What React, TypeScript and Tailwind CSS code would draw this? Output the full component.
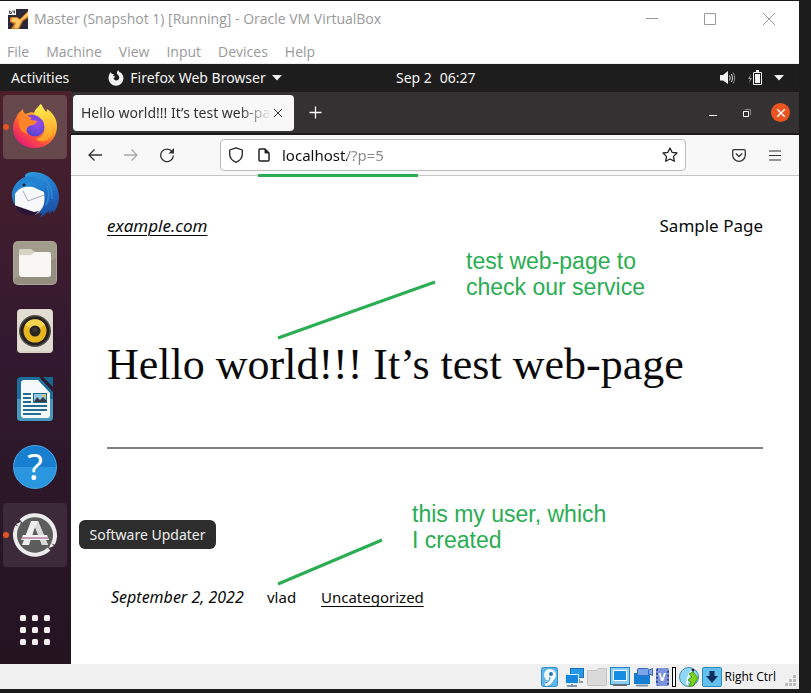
import type { ReactNode } from "react";

const ui = "font-['Open_Sans','Noto_Sans',sans-serif]";
const ubuntu = "font-['Noto_Sans','Open_Sans',sans-serif]";

function VirtualBoxIcon() {
  return (
    <svg width="20" height="20" viewBox="0 0 20 20" aria-hidden="true">
      <rect width="20" height="20" fill="#2b2838" />
      <path d="M3 8h6l3 2 5-5 3-3v7l-5 3-1 2-3 6H3l3-5-4-2V9Z" fill="#dd7a22" />
      <path d="M4 9h5l3 2 8-8v4l-6 4-4 8H6l2-5-5-2Z" fill="#ffc766" />
      <rect width="8" height="6" fill="#f3f3f3" />
      <path d="M1.500 1.500v3h2v-1.500h-2M5 1.500v1.500h1.500M6.500 1.500v3" stroke="#555" fill="none" />
    </svg>
  );
}

function CaretDown() {
  return (
    <svg width="10" height="6" viewBox="0 0 10 6" aria-hidden="true">
      <path d="M0 0h10L5 5.500Z" fill="#f2f2f2" />
    </svg>
  );
}

function FirefoxSymbolic() {
  return (
    <svg width="16" height="16" viewBox="0 0 16 16" aria-hidden="true">
      <path
        d="M2.600 2.200 4 4l2.500.3c-1 .4-1.400 1-1.300 1.800l2 .4c-.3.900-1 1-1.600 1.500.2 1.700 1.500 2.600 3 2.400 1.800-.2 2.900-1.600 2.600-3.400C11 5.500 9.500 5 9 3.500 8.700 2.200 9.300 1 10.300 0c.2 1.400 1.200 2 2.200 2.600 0 0 3 2 3 5.700A7.500 7.500 0 0 1 8 15.800 7.500 7.500 0 0 1 .5 8.300C.5 6 1.300 3.800 2.600 2.200Z"
        fill="#f2f2f2"
      />
    </svg>
  );
}

function FirefoxLogo() {
  return (
    <svg width="46" height="48" viewBox="0 0 46 48" aria-hidden="true">
      <defs>
        <linearGradient id="ffBody" x1="0.850" y1="0.100" x2="0.200" y2="0.950">
          <stop offset="0" stopColor="#ffe847" />
          <stop offset="0.350" stopColor="#ffa326" />
          <stop offset="0.650" stopColor="#ff5536" />
          <stop offset="1" stopColor="#e8187a" />
        </linearGradient>
        <radialGradient id="ffGlobe" cx="0.600" cy="0.250" r="0.800">
          <stop offset="0" stopColor="#a84bf0" />
          <stop offset="1" stopColor="#4b45c8" />
        </radialGradient>
        <linearGradient id="ffFlame" x1="0.500" y1="0" x2="0.600" y2="1">
          <stop offset="0" stopColor="#fff04d" />
          <stop offset="1" stopColor="#ff9a25" />
        </linearGradient>
      </defs>
      <path
        d="M4 15c1-3 2-5 4-6l3-3c0 3 1 4 3 5 4-2 7-2 8-1l7-9 5 8c1-1 1-2 1-3 6 4 10 10 10 17 0 13-10 22-22 22S1 37 1 25c0-4 1-7 3-10Z"
        fill="url(#ffBody)"
      />
      <path d="M29 1c1 6 6 8 10 13 5 6 5 15-1 21-5 5-11 4-14 1 8-2 10-8 8-14-2-5-9-7-10-12 1-4 4-6 7-9Z" fill="url(#ffFlame)" />
      <circle cx="23" cy="24" r="9.500" fill="url(#ffGlobe)" />
      <path d="M6 13c6-1 11 1 13 4l6 1c-1 4-5 4-8 5-3 2-3 5-1 8-6-1-9-5-9-10Z" fill="#ff8429" />
      <path d="M15 13c3-2 9-2 13 2 3 2 4 5 4 8-2-4-5-6-8-6-3-2-6-3-9-4Z" fill="#8445dc" />
    </svg>
  );
}

function ThunderbirdLogo() {
  return (
    <svg width="48" height="48" viewBox="0 0 48 48" aria-hidden="true">
      <defs>
        <linearGradient id="tbBody" x1="0.300" y1="0" x2="0.700" y2="1">
          <stop offset="0" stopColor="#2b9de0" />
          <stop offset="0.550" stopColor="#1f6fc4" />
          <stop offset="1" stopColor="#1d4a9e" />
        </linearGradient>
      </defs>
      <path
        d="M14 4c3-3 6-3 8-3 12 0 25 8 26 24 0 7-2 13-6 17v-3l-4 4v-3l-9 7 2-5C15 45 2 38 1 26 0 18 5 10 14 6Z"
        fill="url(#tbBody)"
      />
      <path d="M4 36V23c4-7 11-8 18-7l11 5c1 8 1 14-5 20l-4 3Z" fill="#f7f8fa" />
      <path d="m12 20 5 10 16-6" stroke="#a7adb4" fill="none" />
      <path d="m3 34 20 7 5-1-4 4C16 46 7 42 3 34Z" fill="#2a1436" />
      <path d="M14 6C7 9 3 15 2 21c2-2 4-3 7-3 2-5 7-8 14-7 4 1 7 4 10 8 0-8-6-15-19-13Z" fill="#2482d2" />
      <path d="M24 3c10 3 18 12 17 25M36 15c3 7 2 13-1 19" stroke="#2f8ad6" strokeWidth="1.500" fill="none" />
      <circle cx="13" cy="14" r="1.500" fill="#0d2140" />
    </svg>
  );
}

function FilesLogo() {
  return (
    <svg width="44" height="44" viewBox="0 0 44 44" aria-hidden="true">
      <rect width="44" height="44" rx="5" fill="#aaa595" />
      <rect x="1" y="1" width="42" height="42" rx="4" fill="#938e7d" />
      <path d="M1 5a4 4 0 0 1 4-4h34a4 4 0 0 1 4 4v12L1 38Z" fill="#a19c8b" />
      <path d="M6 10q0-2 2-2h10l4 3v8H6Z" fill="#d7d3c5" />
      <path d="M6 14h12l4-3h14q2 0 2 2v20q0 3-3 3H9q-3 0-3-3Z" fill="#f8f7f4" />
    </svg>
  );
}

function RhythmboxLogo() {
  return (
    <svg width="36" height="44" viewBox="0 0 36 44" aria-hidden="true">
      <rect width="36" height="44" rx="4" fill="#d9d3c6" />
      <rect x="1" y="1" width="34" height="41" rx="3" fill="#e3ded3" />
      <circle cx="18" cy="22" r="16" fill="#55514c" />
      <circle cx="18" cy="22" r="14.500" fill="#24211f" />
      <circle cx="18" cy="22" r="11.500" fill="#e8b720" />
      <path d="M18 22 8 16a11.500 11.500 0 0 1 20 0Z" fill="#f5d34f" />
      <circle cx="18" cy="22" r="5.500" fill="#272421" />
      <circle cx="18" cy="21" r="2.500" fill="#3a3733" />
    </svg>
  );
}

function WriterLogo() {
  return (
    <svg width="36" height="44" viewBox="0 0 36 44" aria-hidden="true">
      <path d="M4 0h18l14 15v25a4 4 0 0 1-4 4H4a4 4 0 0 1-4-4V4a4 4 0 0 1 4-4Z" fill="#1c6f9c" />
      <path d="M0 22h36v18a4 4 0 0 1-4 4H4a4 4 0 0 1-4-4Z" fill="#4799be" />
      <path d="M26 0h10v10Z" fill="#19658f" />
      <path d="M4 6q0-3 3-3h14l12 13v22q0 3-3 3H7q-3 0-3-3Z" fill="#f6f9fa" />
      <path d="M6 17h8M6 21h8M6 25h8M6 29h24M6 33h24M6 37h18" stroke="#226c91" strokeWidth="2" />
      <rect x="16" y="16" width="14" height="10" fill="#216f98" />
      <rect x="17" y="17" width="12" height="8" fill="#8fc7e5" />
      <path d="m17 25 3-5 3 3 3-3 3 3v2Z" fill="#333c42" />
      <circle cx="27" cy="18.500" r="1.500" fill="#efc14a" />
    </svg>
  );
}

function HelpLogo() {
  return (
    <span className="flex h-11 w-11 items-center justify-center rounded-full border border-[#4aa5e6] bg-linear-to-b from-[#187fd0] from-50% to-[#2b96e0] to-50% text-[36px] leading-[44px] text-white font-['Noto_Sans',sans-serif]">
      ?
    </span>
  );
}

function UpdaterLogo() {
  return (
    <svg width="44" height="44" viewBox="0 0 44 44" aria-hidden="true">
      <circle cx="22" cy="22" r="20" fill="#5d5c5c" />
      <path d="M8 8A20 20 0 0 1 40 31M36 36A20 20 0 0 1 4 13" fill="none" stroke="#ececec" strokeWidth="4" />
      <path d="m3 11 5-2-2 5ZM41 33l-5 2 2-5Z" fill="#ececec" />
      <path d="M18 8h7l10 24h-6L22 14l-6 18h-7Z" fill="#efefef" />
      <path d="m22 14 3-6 10 24h-6Z" fill="#dadada" />
      <path d="M10 22h24l2 5H8Z" fill="#f1f1f1" />
      <path d="M9 25h26" stroke="#95467c" strokeWidth="1" />
    </svg>
  );
}

const dockApps: { name: string; icon: ReactNode; active?: string; running?: boolean }[] = [
  { name: "Firefox Web Browser", icon: <FirefoxLogo />, active: "bg-[#65474c]", running: true },
  { name: "Thunderbird Mail", icon: <ThunderbirdLogo /> },
  { name: "Files", icon: <FilesLogo /> },
  { name: "Rhythmbox", icon: <RhythmboxLogo /> },
  { name: "LibreOffice Writer", icon: <WriterLogo /> },
  { name: "Help", icon: <HelpLogo /> },
  { name: "Software Updater", icon: <UpdaterLogo />, active: "bg-[#3c2a3b]", running: true },
];

function TitleBar() {
  return (
    <header className={`bg-white text-[#999] ${ui}`}>
      <div className="flex h-9 items-center pl-2">
        <VirtualBoxIcon />
        <h1 className="ml-1.5 text-[14px] leading-5 whitespace-nowrap">Master (Snapshot 1) [Running] - Oracle VM VirtualBox</h1>
        <div className="ml-auto flex">
          <button aria-label="Minimize" className="flex h-9 w-[58px] items-center justify-center">
            <svg width="12" height="12" viewBox="0 0 12 12"><path d="M0 5.500h12" stroke="#999" /></svg>
          </button>
          <button aria-label="Maximize" className="flex h-9 w-[58px] items-center justify-center">
            <svg width="12" height="12" viewBox="0 0 12 12"><path d="M.5.500h11v11H.5Z" stroke="#999" fill="none" /></svg>
          </button>
          <button aria-label="Close" className="flex h-9 w-[60px] items-center justify-center">
            <svg width="12" height="12" viewBox="0 0 12 12"><path d="m0 0 12 12M12 0 0 12" stroke="#999" /></svg>
          </button>
        </div>
      </div>
      <nav aria-label="Machine menu" className="flex h-[27px] items-center gap-[17px] border-b border-[#efefef] pt-1 pl-[7px] text-[14px] leading-5">
        {["File", "Machine", "View", "Input", "Devices", "Help"].map((m) => (
          <button key={m}>{m}</button>
        ))}
      </nav>
    </header>
  );
}

function GnomeBar() {
  return (
    <div className={`flex h-[27px] items-center bg-[#1d1d1d] text-[14px] leading-5 text-[#f2f2f2] ${ubuntu}`}>
      <div className="flex w-[396px] items-center pl-[11px]">
        <button>Activities</button>
        <button className="ml-[39px] flex items-center gap-1.5 whitespace-nowrap">
          <FirefoxSymbolic />
          Firefox Web Browser
          <CaretDown />
        </button>
      </div>
      <button className="flex gap-2 whitespace-nowrap">
        <span>Sep 2</span>
        <span>06:27</span>
      </button>
      <button aria-label="System menu" className="mr-[15px] ml-auto flex items-center">
        <svg width="16" height="14" viewBox="0 0 16 14" aria-hidden="true">
          <path d="M0 4h3l5-4v13L3 9.500H0Z" fill="#f2f2f2" />
          <path d="M9.500 4.500q1.500 2.500 0 5M11.500 3q2.500 4 0 8" stroke="#dcdcdc" fill="none" />
          <path d="M13 1.500q3.500 5.500 0 11" stroke="#888" fill="none" />
        </svg>
        <svg className="ml-3 mr-3" width="14" height="16" viewBox="0 0 14 16" aria-hidden="true">
          <path d="M3 4 0 9h2l-1 4 3-5H2Z" fill="#999" />
          <path d="M5.500 2.500h8v12h-8Z" stroke="#f2f2f2" fill="none" />
          <path d="M7 4h5v9H7ZM8 0h3v2H8Z" fill="#f2f2f2" />
        </svg>
        <CaretDown />
      </button>
    </div>
  );
}

function Dock() {
  return (
    <nav aria-label="Dock" className="flex w-[71px] shrink-0 flex-col bg-linear-to-b from-[#4b202b] via-[#32192f] via-45% to-[#231420] pt-1 pl-[3px]">
      <ul className="flex flex-col gap-1">
        {dockApps.map((app) => (
          <li key={app.name} className="relative">
            <button aria-label={app.name} className={`flex h-16 w-16 items-center justify-center rounded ${app.active ?? ""}`}>
              {app.icon}
            </button>
            {app.running && <span className="absolute top-[29px] left-0 h-1.5 w-1.5 rounded-full bg-[#e8541f]" />}
            {app.name === "Software Updater" && (
              <span role="tooltip" className={`absolute top-[17px] left-[76px] z-10 flex h-[29px] w-[137px] items-center justify-center rounded-md bg-[#2d2d2d] text-[14px] leading-5 whitespace-nowrap text-[#eee] ${ubuntu}`}>
                Software Updater
              </span>
            )}
          </li>
        ))}
      </ul>
      <button aria-label="Show Applications" className="mt-auto mb-[2px] flex h-16 w-16 items-center justify-center">
        <svg width="30" height="30" viewBox="0 0 30 30" fill="#f3edf1">
          {[0, 12, 24].map((y) => [0, 12, 24].map((x) => <rect key={`${x}-${y}`} x={x} y={y} width="6" height="6" rx="1.500" />))}
        </svg>
      </button>
    </nav>
  );
}

function TabStrip() {
  return (
    <div className="flex h-11 items-center border-y border-b-2 border-[#1c1b1b] bg-[#333131] pl-0.5">
      <div className={`flex h-9 w-[221px] items-center rounded bg-[#f8f8f8] pl-2 text-[14px] leading-5 text-[#333] ${ubuntu}`}>
        <span className="w-[189px] overflow-hidden whitespace-nowrap [mask-image:linear-gradient(to_right,black_158px,transparent_190px)]">
          Hello world!!! It’s test web-page
        </span>
        <button aria-label="Close tab" className="flex h-5 w-4 items-center justify-center">
          <svg width="8" height="8" viewBox="0 0 8 8"><path d="m0 0 8 8M8 0 0 8" stroke="#333" /></svg>
        </button>
      </div>
      <button aria-label="New tab" className="ml-[13px] flex h-6 w-4 items-center justify-center">
        <svg width="13" height="13" viewBox="0 0 13 13"><path d="M6.500.500v12M.5 6.500h12" stroke="#fff" strokeWidth="1.300" /></svg>
      </button>
      <div className="mr-[9px] ml-auto flex items-center gap-5">
        <button aria-label="Minimize window"><svg width="8" height="8" viewBox="0 0 8 8"><path d="M0 6.500h8" stroke="#fff" /></svg></button>
        <button aria-label="Restore window" className="ml-1.5">
          <svg width="8" height="8" viewBox="0 0 8 8">
            <path d="M2 .5h5.500V6" stroke="#888" fill="none" />
            <path d="M.5 2.500h5v5h-5Z" stroke="#fff" fill="none" />
          </svg>
        </button>
        <button aria-label="Close window" className="flex h-[19px] w-[19px] items-center justify-center rounded-full bg-[#e95420]">
          <svg width="8" height="8" viewBox="0 0 8 8"><path d="m0 0 8 8M8 0 0 8" stroke="#fff" strokeWidth="1.400" /></svg>
        </button>
      </div>
    </div>
  );
}

function Toolbar() {
  const slot = "flex h-8 w-9 shrink-0 items-center justify-center";
  return (
    <div className="flex h-[41px] items-center border-b border-[#c5c5c5] bg-[#f8f8f8] px-1.5">
      <button aria-label="Back" className={slot}>
        <svg width="14" height="14" viewBox="0 0 14 14"><path d="M14 7H1M6.500 1.500 1 7l5.500 5.500" stroke="#333" strokeWidth="1.300" fill="none" /></svg>
      </button>
      <button aria-label="Forward" className={slot}>
        <svg width="14" height="14" viewBox="0 0 14 14"><path d="M0 7h13M7.500 1.500 13 7l-5.500 5.500" stroke="#aaa" strokeWidth="1.300" fill="none" /></svg>
      </button>
      <button aria-label="Reload" className={slot}>
        <svg width="16" height="16" viewBox="0 0 16 16">
          <path d="M13 4.500A6.300 6.300 0 1 0 14.300 8.500" stroke="#333" strokeWidth="1.300" fill="none" />
          <path d="M15 1v5.500H9.500Z" fill="#333" />
        </svg>
      </button>
      <div className="relative z-10 mx-[35px] flex h-8 flex-1 items-center rounded border border-[#bbb] bg-white px-[7px]">
        <svg width="16" height="16" viewBox="0 0 16 16" aria-hidden="true">
          <path d="M8 .8 14.300 3V7c0 4-3 7-6.300 8.300C4.700 14 1.700 11 1.700 7V3Z" stroke="#222" strokeWidth="1.300" strokeLinejoin="round" fill="none" />
        </svg>
        <svg className="ml-3.5" width="12" height="14" viewBox="0 0 12 14" aria-hidden="true">
          <path d="M2 1h5l4 4v7q0 1-1 1H2q-1 0-1-1V2q0-1 1-1Z" stroke="#222" strokeWidth="1.500" fill="none" />
          <path d="M7 1v4h4Z" fill="#222" stroke="#222" />
        </svg>
        <input
          aria-label="Address"
          defaultValue="localhost/?p=5"
          className={`ml-3 w-0 flex-1 bg-[linear-gradient(to_right,#111_65px,#888_65px)] bg-clip-text text-[15px] leading-5 text-transparent outline-none ${ubuntu}`}
        />
        <button aria-label="Bookmark this page">
          <svg width="16" height="16" viewBox="0 0 16 16">
            <path d="m8 1 2.100 4.300 4.900.7-3.500 3.400.8 4.900L8 12l-4.300 2.300.8-4.900L1 6l4.900-.7Z" stroke="#222" strokeWidth="1.300" strokeLinejoin="round" fill="none" />
          </svg>
        </button>
        <span className="absolute -bottom-[7px] left-[37px] h-[3px] w-40 bg-[#2aad53]" />
      </div>
      <button aria-label="Save to Pocket" className={slot}>
        <svg width="14" height="13" viewBox="0 0 14 13">
          <path d="M2 .7h10q1.300 0 1.300 1.300v4A6.300 6.300 0 0 1 .7 6V2Q.7.700 2 .7Z" stroke="#333" strokeWidth="1.300" fill="none" />
          <path d="m3.800 4.500 3.200 3 3.200-3" stroke="#333" strokeWidth="1.300" fill="none" />
        </svg>
      </button>
      <button aria-label="Open application menu" className={slot}>
        <svg width="12" height="11" viewBox="0 0 12 11"><path d="M0 1h12M0 5.500h12M0 10h12" stroke="#333" strokeWidth="1.200" /></svg>
      </button>
    </div>
  );
}

function WebPage() {
  return (
    <main className={`relative flex-1 bg-white px-9 pt-[38px] text-[#0a0a0a] ${ubuntu}`}>
      <div className="flex justify-between text-[17px] leading-6">
        <a href="#home" className="italic underline decoration-1 underline-offset-3">example.com</a>
        <a href="#sample">Sample Page</a>
      </div>
      <h2 className="mt-[99px] text-[44px] leading-[56px] whitespace-nowrap font-['Liberation_Serif',serif]">
        Hello world!!! It’s test web-page
      </h2>
      <hr className="mt-[54px] border-t-2 border-[#808080]" />
      <div className="mt-[136px] flex items-baseline pb-[54px] pl-1 text-[15px] leading-6">
        <time dateTime="2022-09-02" className="w-[156px] text-[16px] whitespace-nowrap italic">September 2, 2022</time>
        <span className="w-[54px]">vlad</span>
        <a href="#category" className="underline decoration-1 underline-offset-3">Uncategorized</a>
      </div>

      <svg className="absolute top-0 left-0" width="400" height="420" viewBox="0 0 400 420" stroke="#2aad53" strokeWidth="3" aria-hidden="true">
        <path d="M207 162 364 106M207 408 311 364" />
      </svg>
      <p className="absolute top-[72px] left-[395px] text-[23px] leading-[26px] whitespace-nowrap text-[#2aad53] font-['Liberation_Sans',sans-serif]">
        test web-page to<br />check our service
      </p>
      <p className="absolute top-[325px] left-[341px] text-[23px] leading-[26px] whitespace-nowrap text-[#2aad53] font-['Liberation_Sans',sans-serif]">
        this my user, which<br />I created
      </p>
    </main>
  );
}

function StatusBar() {
  return (
    <footer className={`flex h-[25px] items-center justify-end gap-[3px] bg-[#f0f0f0] pr-[3px] text-black ${ui}`}>
      <svg width="18" height="20" viewBox="0 0 18 20" aria-label="Hard disks">
        <rect x=".5" y=".5" width="16" height="19" rx="2" fill="#62b5ea" stroke="#2f8fc8" />
        <circle cx="9" cy="8" r="6" fill="#f4fbff" />
        <path d="M11 11q-1 5-7 6" stroke="#f4fbff" strokeWidth="4" fill="none" />
        <circle cx="10" cy="7" r="2" fill="#2377b6" />
        <path d="M4 16q5-1 5-6" stroke="#2377b6" fill="none" />
      </svg>
      <svg className="ml-0.5" width="20" height="20" viewBox="0 0 20 20" aria-label="Network">
        <rect x="6.500" y="1.500" width="13" height="9" fill="#259ae8" stroke="#1b70b5" />
        <path d="M15 12v3h4" stroke="#8c9ba6" strokeWidth="2" fill="none" />
        <rect x="1.500" y="7.500" width="13" height="9" fill="#1687dd" stroke="#d7edfb" />
        <path d="M8 17v2M3 19h10" stroke="#8095a5" strokeWidth="2" />
      </svg>
      <svg width="20" height="20" viewBox="0 0 20 20" aria-label="Shared folders">
        <path d="M.5 3.500h9l2-2h8v16q0 1-1 1h-17q-1 0-1-1Z" fill="#dadada" stroke="#c2c2c2" />
      </svg>
      <svg width="20" height="20" viewBox="0 0 20 20" aria-label="Display">
        <rect x=".5" y=".5" width="19" height="17" fill="#8bcdf3" stroke="#2384c6" />
        <rect x="3.500" y="3.500" width="13" height="10" fill="#188be2" stroke="#fff" />
        <path d="M3 18h14" stroke="#5d6b74" strokeWidth="2" />
      </svg>
      <svg width="20" height="20" viewBox="0 0 20 20" aria-label="Recording">
        <rect x="1" y="6" width="16" height="11" fill="#147fd4" />
        <path d="M3 18.500h12" stroke="#8095a5" strokeWidth="2" />
        <rect x="4.500" y="1.500" width="11" height="7" rx="1" fill="#7ca4ed" stroke="#3c68b8" />
        <path d="m15.500 3.500 4-2v7l-4-2Z" fill="#83a7ea" stroke="#3c68b8" />
      </svg>
      <span className="flex h-[18px] w-[13px] items-center justify-center rounded-xs border-x-2 border-dotted border-[#39468f] bg-[#7c93dd] text-[11px] leading-none font-bold text-white">V</span>
      <span className="h-5 w-1 border border-black bg-white" />
      <svg width="20" height="20" viewBox="0 0 20 20" aria-label="Mouse integration">
        <circle cx="10" cy="10" r="9.500" fill="#8fd6f5" stroke="#3c8fb9" />
        <path d="M16 1Q8 6 8 18" stroke="#e9f9ff" strokeWidth="2" fill="none" />
        <path d="m10 7 4-2 5 6-5 8h-4l2-4-3-2 4-3Z" fill="#7fd11b" stroke="#4c9a15" />
        <circle cx="14" cy="3" r="1.500" fill="#222" />
      </svg>
      <svg width="20" height="20" viewBox="0 0 20 20" aria-label="Keyboard capture">
        <rect x=".5" y=".5" width="19" height="19" rx="1" fill="#62c0ee" stroke="#2f88b8" />
        <path d="M7.500 4h5v5H16l-6 7-6-7h3.500Z" fill="#0a2d5c" />
      </svg>
      <span className="text-[12px] leading-5 whitespace-nowrap">Right Ctrl</span>
      <svg className="mt-2 ml-1.5" width="11" height="11" viewBox="0 0 11 11" fill="#bdbdbd" aria-hidden="true">
        <path d="M8 0h3v3H8ZM4 4h3v3H4ZM8 4h3v3H8ZM0 8h3v3H0ZM4 8h3v3H4ZM8 8h3v3H8Z" />
      </svg>
    </footer>
  );
}

export default function App() {
  return (
    <div className="flex min-h-screen flex-col bg-[#1b1b1b] pt-px pr-3 pb-1">
      <TitleBar />
      <GnomeBar />
      <div className="flex flex-1">
        <Dock />
        <div className="flex min-w-0 flex-1 flex-col">
          <TabStrip />
          <Toolbar />
          <WebPage />
        </div>
      </div>
      <StatusBar />
    </div>
  );
}
